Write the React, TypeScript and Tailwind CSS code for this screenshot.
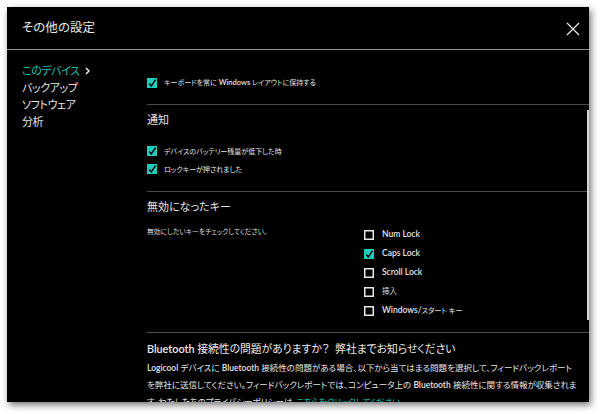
import React from "react";

const TEAL = "#1ccfbd";

function Box({ checked }: { checked?: boolean }) {
  return checked ? (
    <svg width="10" height="10" viewBox="0 0 10 10" className="shrink-0">
      <rect x="0" y="0" width="10" height="10" fill={TEAL} />
      <polyline points="2.2,5.4 4.2,8 8.6,1.6" fill="none" stroke="#000" strokeWidth="1.4" />
    </svg>
  ) : (
    <svg width="10" height="10" viewBox="0 0 10 10" className="shrink-0">
      <rect x="0.75" y="0.75" width="8.5" height="8.5" fill="#000" stroke="#e8e8e8" strokeWidth="1.5" />
    </svg>
  );
}

function Row({ checked, children }: { checked?: boolean; children: React.ReactNode }) {
  return (
    <div className="flex items-center h-[18px] gap-[7px] text-[7px] text-[#e4e4e4]">
      <Box checked={checked} />
      <span>{children}</span>
    </div>
  );
}

function KeyRow({ checked, children }: { checked?: boolean; children: React.ReactNode }) {
  return (
    <div className="flex items-center h-[19px] gap-[8px] text-[8.5px] text-[#e4e4e4] font-semibold">
      <Box checked={checked} />
      <span>{children}</span>
    </div>
  );
}

export default function App() {
  return (
    <div className="w-[600px] h-[414px] bg-white pl-[7px] pt-[7px] overflow-hidden">
      <div className="w-[582px] h-[395px] bg-black flex flex-col overflow-hidden shadow-[2px_3px_7px_rgba(0,0,0,0.55)] [font-feature-settings:'palt'] font-['Lato','Noto_Sans_CJK_JP',sans-serif]">
        <header className="h-[43px] shrink-0 flex items-center justify-between pl-[15px] pr-[9px] border-b border-[#8c8c8c]">
          <span className="text-[12.5px] text-[#e8e8e8]">その他の設定</span>
          <svg width="14" height="14" viewBox="0 0 14 14" className="mt-[2px]">
            <path d="M1 1 L13 13 M13 1 L1 13" stroke="#e8e8e8" strokeWidth="1.3" />
          </svg>
        </header>
        <div className="flex flex-1 min-h-0">
          <nav className="w-[140px] shrink-0 pl-[15px] pt-[12px] flex flex-col text-[11px] leading-[17px] text-[#e4e4e4] tracking-[-0.4px]">
            <div className="flex items-center gap-[5px] text-[#19c2b1]">
              <span>このデバイス</span>
              <svg width="5" height="8" viewBox="0 0 5 8">
                <path d="M1 1 L4 4 L1 7" fill="none" stroke="#f0f0f0" strokeWidth="1.5" />
              </svg>
            </div>
            <div>バックアップ</div>
            <div>ソフトウェア</div>
            <div>分析</div>
          </nav>
          <main className="flex-1 relative overflow-hidden">
            <section className="pt-[24px] pb-[12px] border-b border-[#4c4c4c]">
              <Row checked>
                キーボードを常に <b className="font-semibold text-[7.5px]">Windows</b> レイアウトに保持する
              </Row>
            </section>
            <section className="pt-[6px] pb-[13px] border-b border-[#4c4c4c]">
              <div className="text-[11px] leading-[18px] text-[#e4e4e4]">通知</div>
              <div className="mt-[13px] flex flex-col">
                <Row checked>デバイスのバッテリー残量が低下した時</Row>
                <Row checked>ロックキーが押されました</Row>
              </div>
            </section>
            <section className="pt-[6px] pb-[12px] border-b border-[#4c4c4c]">
              <div className="text-[11px] leading-[18px] text-[#e4e4e4]">無効になったキー</div>
              <div className="mt-[9px] flex">
                <div className="w-[217px] text-[6.8px] leading-[12px] text-[#dcdcdc]">
                  無効にしたいキーをチェックしてください。
                </div>
                <div className="flex flex-col">
                  <KeyRow>Num Lock</KeyRow>
                  <KeyRow checked>Caps Lock</KeyRow>
                  <KeyRow>Scroll Lock</KeyRow>
                  <KeyRow>
                    <span className="font-normal text-[7.5px] text-[#cfcfcf]">挿入</span>
                  </KeyRow>
                  <KeyRow>
                    Windows/<span className="font-normal text-[7.2px]">スタート キー</span>
                  </KeyRow>
                </div>
              </div>
            </section>
            <section className="pt-[7px] pr-[4px]">
              <div className="text-[10.8px] leading-[18px] text-[#ececec] whitespace-nowrap">
                <b className="font-semibold">Bluetooth</b> 接続性の問題がありますか？&nbsp; 弊社までお知らせください
              </div>
              <div className="mt-[2px] text-[8.5px] leading-[17px] text-[#e4e4e4] whitespace-nowrap">
                <div>
                  <b className="font-semibold">Logicool</b> デバイスに <b className="font-semibold">Bluetooth</b>{" "}
                  接続性の問題がある場合、以下から当てはまる問題を選択して、フィードバックレポート
                </div>
                <div>
                  を弊社に送信してください。フィードバックレポートでは、コンピュータ上の{" "}
                  <b className="font-semibold">Bluetooth</b> 接続性に関する情報が収集されま
                </div>
                <div>
                  す。わたしたちのプライバシーポリシーは、
                  <span className="text-[#19c2b1]">こちらをクリックしてください</span>。
                </div>
              </div>
            </section>
            <div className="absolute right-0 top-[60px] w-[2px] h-[210px] bg-[#d4d4d4]" />
          </main>
        </div>
      </div>
    </div>
  );
}
